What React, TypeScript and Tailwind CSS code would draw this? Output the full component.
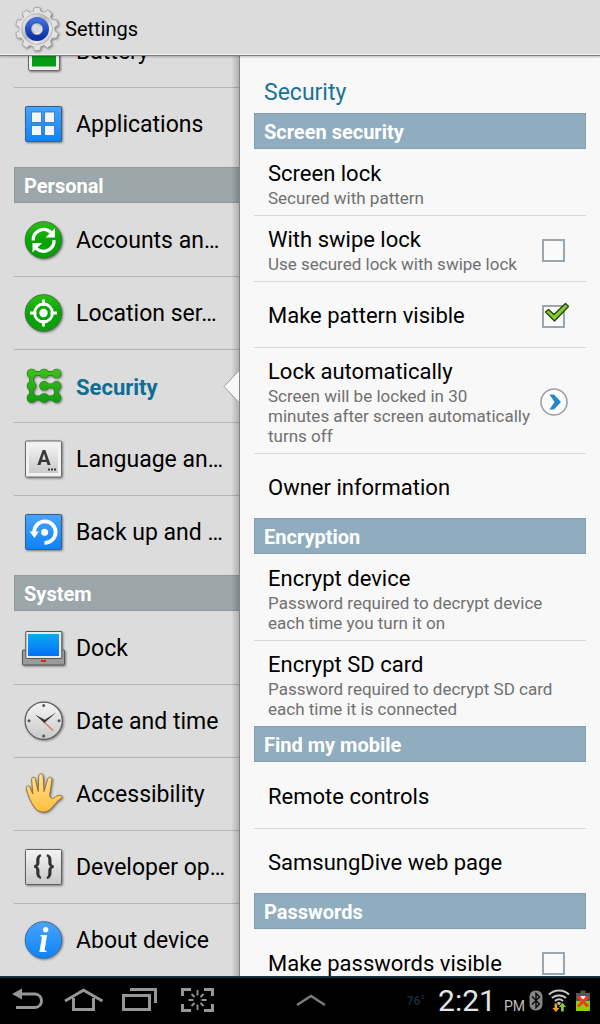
import type { ReactNode } from 'react'

// ── Sidebar icons (44x44 canvas) ──────────
function Icon({ children }: { children: ReactNode }) {
  return (
    <svg width="44" height="44" viewBox="0 0 44 44" className="shrink-0 drop-shadow-[1px_1px_1px_rgba(0,0,0,0.45)]" aria-hidden="true">
      {children}
    </svg>
  )
}

function Gradients() {
  return (
    <svg width="0" height="0" className="absolute" aria-hidden="true">
      <defs>
        <linearGradient id="blue" x1="0" y1="0" x2="0" y2="1">
          <stop offset="0" stopColor="#4aa3fb" />
          <stop offset="1" stopColor="#0b84f8" />
        </linearGradient>
        <linearGradient id="green" x1="0" y1="0" x2="0" y2="1">
          <stop offset="0" stopColor="#2cc015" />
          <stop offset="0.5" stopColor="#06a406" />
          <stop offset="1" stopColor="#0c9c0e" />
        </linearGradient>
        <linearGradient id="pattern" gradientUnits="userSpaceOnUse" x1="0" y1="5" x2="0" y2="39">
          <stop offset="0" stopColor="#3fc218" />
          <stop offset="1" stopColor="#0d9d0f" />
        </linearGradient>
        <linearGradient id="silver" x1="0" y1="0" x2="0" y2="1">
          <stop offset="0" stopColor="#f4f4f4" />
          <stop offset="1" stopColor="#c9c9c9" />
        </linearGradient>
        <linearGradient id="screen" x1="0" y1="0" x2="0" y2="1">
          <stop offset="0" stopColor="#08aaf0" />
          <stop offset="1" stopColor="#0470f8" />
        </linearGradient>
        <linearGradient id="skin" x1="0" y1="0" x2="0" y2="1">
          <stop offset="0" stopColor="#ffe196" />
          <stop offset="1" stopColor="#ffbe3c" />
        </linearGradient>
        <linearGradient id="metal" x1="0" y1="0" x2="1" y2="1">
          <stop offset="0" stopColor="#fafafa" />
          <stop offset="0.45" stopColor="#b9b9b9" />
          <stop offset="0.7" stopColor="#ececec" />
          <stop offset="1" stopColor="#a9a9a9" />
        </linearGradient>
        <linearGradient id="ring" x1="0" y1="0" x2="0" y2="1">
          <stop offset="0" stopColor="#3f6fdc" />
          <stop offset="1" stopColor="#0a2fa8" />
        </linearGradient>
      </defs>
    </svg>
  )
}

const BatteryIcon = () => (
  <Icon>
    <rect x="6.5" y="4.5" width="31" height="37" rx="1.5" fill="#efefef" stroke="#666" />
    <rect x="10" y="10" width="24" height="27.5" fill="#069b17" />
  </Icon>
)

const ApplicationsIcon = () => (
  <Icon>
    <rect x="3.5" y="4.5" width="36" height="35" rx="1" fill="url(#blue)" stroke="#33618f" />
    <g fill="#f2f6fa" stroke="#2a72b8" strokeWidth="0.8">
      <rect x="9.5" y="10" width="10" height="10.5" />
      <rect x="22.5" y="10" width="10" height="10.5" />
      <rect x="9.5" y="23.5" width="10" height="10" />
      <rect x="22.5" y="23.5" width="10" height="10" />
    </g>
  </Icon>
)

const SyncIcon = () => (
  <Icon>
    <circle cx="21.5" cy="22" r="18.3" fill="url(#green)" stroke="#44703f" />
    <g fill="none" stroke="#fff" strokeWidth="3.2">
      <path d="M11.2 22.5A10.5 10.5 0 0 1 29 14.5" />
      <path d="M32 22A10.5 10.5 0 0 1 14 30" />
    </g>
    <path d="M33 10V19.5H23.5ZM10.5 34.5V25H20Z" fill="#fff" />
  </Icon>
)

const LocationIcon = () => (
  <Icon>
    <circle cx="21.5" cy="22" r="18.3" fill="url(#green)" stroke="#44703f" />
    <circle cx="21.5" cy="22" r="9" fill="none" stroke="#fff" strokeWidth="2.8" />
    <circle cx="21.5" cy="22" r="4.2" fill="#fff" />
    <path d="M21.5 8.5V15M21.5 29V35.5M8 22H14.5M28.5 22H35" stroke="#fff" strokeWidth="2.8" />
  </Icon>
)

const patternDots = [
  [9.5, 9.5], [22, 9.5], [34.5, 9.5],
  [9.5, 21.8], [22, 21.8], [34.5, 21.8],
  [9.5, 34], [22, 34], [34.5, 34],
]
const patternLine = 'M34.5 9.5H9.5V34H34.5V21.8H22'

const SecurityIcon = () => (
  <Icon>
    <path d={patternLine} fill="none" stroke="#2c7a1e" strokeWidth="4.8" />
    {patternDots.map(([x, y]) => (
      <circle key={`${x}-${y}`} cx={x} cy={y} r="4.8" fill="#2c7a1e" />
    ))}
    <path d={patternLine} fill="none" stroke="url(#pattern)" strokeWidth="3.4" />
    {patternDots.map(([x, y]) => (
      <circle key={`${x}-${y}`} cx={x} cy={y} r="4.2" fill="url(#pattern)" />
    ))}
  </Icon>
)

const LanguageIcon = () => (
  <Icon>
    <rect x="3.5" y="4" width="36" height="36" rx="1" fill="#f1f1f1" stroke="#6a6a6a" />
    <rect x="7" y="7" width="29" height="29" fill="url(#silver)" />
    <text x="22" y="28" textAnchor="middle" fontFamily="Roboto, sans-serif" fontSize="20" fontWeight="700" fill="#383838">A</text>
    <path d="M26 32.5h2M29 32.5h2M32 32.5h2" stroke="#383838" strokeWidth="2" />
  </Icon>
)

const BackupIcon = () => (
  <Icon>
    <rect x="3.5" y="4.5" width="36" height="35" rx="1" fill="url(#blue)" stroke="#33618f" />
    <path d="M12.2 22A10.7 10.7 0 1 1 22.5 32.8" fill="none" stroke="#fff" strokeWidth="3.8" />
    <path d="M7.5 21.5H17L12.5 28Z" fill="#fff" />
    <circle cx="22.6" cy="22.3" r="3.5" fill="#fff" />
  </Icon>
)

const DockIcon = () => (
  <Icon>
    <rect x="0.5" y="24" width="42" height="15" rx="1" fill="#9b9b9b" stroke="#555" />
    <rect x="3.8" y="5.5" width="36" height="27" rx="0.5" fill="#e9e9e9" stroke="#555" />
    <rect x="6" y="8" width="31" height="22" fill="url(#screen)" />
    <rect x="19" y="34" width="5" height="2" fill="#d8290e" />
  </Icon>
)

const ClockIcon = () => (
  <Icon>
    <circle cx="21.7" cy="21.7" r="18.6" fill="url(#silver)" stroke="#5c5c5c" strokeWidth="1.2" />
    <g fill="#555">
      <circle cx="21.7" cy="6.5" r="1.5" />
      <circle cx="21.7" cy="37" r="1.5" />
      <circle cx="7" cy="21.8" r="1.5" />
      <circle cx="37" cy="21.8" r="1.5" />
    </g>
    <path d="M21.5 22.5L31 31.5" stroke="#e46a64" strokeWidth="1.2" />
    <path d="M13 15.5L22.8 20.8L34.5 13.2L22.3 24Z" fill="#333" />
  </Icon>
)

const HandIcon = () => (
  <Icon>
    <path
      d="M13 36C9 31 5.5 22.5 4.3 16.5C3.8 13.5 7 12.8 8 15.5L10.8 22L9.6 8C9.4 4.5 13 4.4 13.5 7.5L16.2 19.5L16.7 4C16.8 1 21 1 21.2 4L22 19.5L25.7 7C26.6 4 30.4 5 29.9 8L27.6 23.5C28.2 26.5 30.3 27.2 32 25.8C34 24 36.5 23 38.5 23.3C40.7 23.7 40.3 26 38.5 27C35 29 32.5 32.5 30 35.5C25.5 41.5 17.5 41.5 13 36Z"
      fill="url(#skin)"
      stroke="#8a6a33"
      strokeWidth="0.9"
    />
  </Icon>
)

const DeveloperIcon = () => (
  <Icon>
    <rect x="3.5" y="4.5" width="36" height="35" rx="1" fill="url(#silver)" stroke="#5f5f5f" />
    <text x="15.5" y="29" textAnchor="middle" fontFamily="Roboto, sans-serif" fontSize="25" fontWeight="700" fill="#333">{'{'}</text>
    <text x="28" y="29" textAnchor="middle" fontFamily="Roboto, sans-serif" fontSize="25" fontWeight="700" fill="#333">{'}'}</text>
  </Icon>
)

const AboutIcon = () => (
  <Icon>
    <circle cx="21.5" cy="22" r="18.3" fill="url(#blue)" stroke="#3c6da0" />
    <text x="21.5" y="34" textAnchor="middle" fontFamily="'Liberation Serif', serif" fontSize="36" fontWeight="700" fontStyle="italic" fill="#fff">i</text>
  </Icon>
)

function GearIcon() {
  return (
    <svg width="46" height="46" viewBox="-23 -23 46 46" className="drop-shadow-[1px_1px_1px_rgba(0,0,0,0.4)]" aria-hidden="true">
      <g fill="#e2e2e2" stroke="#9a9a9a" strokeWidth="0.7">
        {[0, 36, 72, 108, 144, 180, 216, 252, 288, 324].map((angle) => (
          <path key={angle} d="M-4.5 -16L-2.6 -21.5H2.6L4.5 -16Z" transform={`rotate(${angle})`} />
        ))}
      </g>
      <circle r="17.5" fill="#e4e4e4" />
      <circle r="15.5" fill="url(#metal)" stroke="#a5a5a5" strokeWidth="0.7" />
      <circle r="9" fill="none" stroke="url(#ring)" strokeWidth="6" />
      <circle r="6" fill="url(#metal)" stroke="#0d2c85" strokeWidth="0.5" />
      <circle r="4" fill="#d6dae4" />
    </svg>
  )
}

// ── Data ──────────────────────────────────
type MenuItem = { label: string; icon: () => ReactNode; active?: boolean }

const menu: { title?: string; items: MenuItem[] }[] = [
  {
    items: [
      { label: 'Battery', icon: BatteryIcon },
      { label: 'Applications', icon: ApplicationsIcon },
    ],
  },
  {
    title: 'Personal',
    items: [
      { label: 'Accounts an…', icon: SyncIcon },
      { label: 'Location ser…', icon: LocationIcon },
      { label: 'Security', icon: SecurityIcon, active: true },
      { label: 'Language an…', icon: LanguageIcon },
      { label: 'Back up and …', icon: BackupIcon },
    ],
  },
  {
    title: 'System',
    items: [
      { label: 'Dock', icon: DockIcon },
      { label: 'Date and time', icon: ClockIcon },
      { label: 'Accessibility', icon: HandIcon },
      { label: 'Developer op…', icon: DeveloperIcon },
      { label: 'About device', icon: AboutIcon },
    ],
  },
]

type Pref = { title: string; summary?: string; control?: 'on' | 'off' | 'more' }

const preferences: { title: string; items: Pref[] }[] = [
  {
    title: 'Screen security',
    items: [
      { title: 'Screen lock', summary: 'Secured with pattern' },
      { title: 'With swipe lock', summary: 'Use secured lock with swipe lock', control: 'off' },
      { title: 'Make pattern visible', control: 'on' },
      {
        title: 'Lock automatically',
        summary: 'Screen will be locked in 30 minutes after screen automatically turns off',
        control: 'more',
      },
      { title: 'Owner information' },
    ],
  },
  {
    title: 'Encryption',
    items: [
      { title: 'Encrypt device', summary: 'Password required to decrypt device each time you turn it on' },
      { title: 'Encrypt SD card', summary: 'Password required to decrypt SD card each time it is connected' },
    ],
  },
  {
    title: 'Find my mobile',
    items: [{ title: 'Remote controls' }, { title: 'SamsungDive web page' }],
  },
  {
    title: 'Passwords',
    items: [{ title: 'Make passwords visible', control: 'off' }],
  },
]

// ── Sub-components ────────────────────────
function MenuRow({ label, icon: ItemIcon, active }: MenuItem) {
  return (
    <li className="relative border-b border-[#b3b3b3] last:border-b-0">
      <a
        href="#"
        aria-current={active ? 'page' : undefined}
        className={`flex h-[72px] items-center gap-[10px] pl-2 whitespace-nowrap ${active ? 'text-[22px] font-bold text-[#0f6d94]' : 'text-[23px] text-black'}`}
      >
        <ItemIcon />
        <span className="pt-0.5">{label}</span>
      </a>
      {active && (
        <svg width="16" height="34" viewBox="0 0 16 34" className="absolute top-5 right-0 z-10" aria-hidden="true">
          <path d="M16 1L1 16.5L16 32Z" fill="#f8f8f8" />
          <path d="M15.5 1L1 16.5L15.5 32" fill="none" stroke="#9b9b9b" />
        </svg>
      )}
    </li>
  )
}

function PrefRow({ title, summary, control }: Pref) {
  const text = (
    <span className="flex-1">
      <span className="block text-[22px] leading-7 text-black">{title}</span>
      {summary && <span className="block text-[17px] leading-5 text-[#707070]">{summary}</span>}
    </span>
  )
  const row = 'flex w-full items-center pt-[10px] pb-[7px] pl-[14px] text-left'

  return (
    <li className="flex min-h-[66px] border-b border-[#d6d8da] last:min-h-16 last:border-b-0">
      {control === 'on' || control === 'off' ? (
        <label className={`${row} pr-[21px]`}>
          {text}
          <span className="relative flex">
            <input
              type="checkbox"
              defaultChecked={control === 'on'}
              className="peer size-[23px] appearance-none border-2 border-[#9ba6ae] bg-[#fafafa]"
            />
            <svg width="28" height="22" viewBox="0 0 28 22" className="pointer-events-none absolute -top-1 left-0 hidden peer-checked:block" aria-hidden="true">
              <path d="M3.5 11L6.5 8.5L12 13.5L23.5 2.5L26.5 5.5L12.5 20Z" fill="#86cc2a" stroke="#24400c" strokeWidth="1.3" strokeLinejoin="round" />
            </svg>
          </span>
        </label>
      ) : (
        <button type="button" className={`${row} ${control === 'more' ? 'gap-[10px] pr-[18px]' : 'pr-[14px]'}`}>
          {text}
          {control === 'more' && (
            <svg width="28" height="28" viewBox="0 0 28 28" className="shrink-0" aria-hidden="true">
              <circle cx="14" cy="14" r="13" fill="#fcfcfc" stroke="#9aa0a8" strokeWidth="1.6" />
              <path d="M9.5 6.5H14L21 14L14 21.5H9.5L14.5 14Z" fill="#2489cb" />
            </svg>
          )}
        </button>
      )}
    </li>
  )
}

function NavBar() {
  return (
    <footer className="flex h-12 shrink-0 items-center border-t-2 border-[#12303d] bg-black">
      <nav className="flex items-center pl-[10px] text-[#969696]">
        <button type="button" aria-label="Back">
          <svg width="36" height="26" viewBox="0 0 36 26" fill="none" stroke="currentColor" strokeWidth="3">
            <path d="M10 6H25.5A6.8 6.8 0 0 1 25.5 19.5H6" />
            <path d="M2 6L12 0.5V11.5Z" fill="currentColor" stroke="none" />
          </svg>
        </button>
        <button type="button" aria-label="Home" className="ml-[18px]">
          <svg width="40" height="26" viewBox="0 0 40 26" fill="none" stroke="currentColor" strokeWidth="3">
            <path d="M1 13L19.5 2.2L38.5 13" />
            <path d="M9.5 10V21.5H29.5V10" />
          </svg>
        </button>
        <button type="button" aria-label="Recent apps" className="ml-[18px]">
          <svg width="36" height="26" viewBox="0 0 36 26" fill="none" stroke="currentColor" strokeWidth="3">
            <rect x="1.5" y="7.5" width="26" height="14" />
            <path d="M8 1.5H33.5V15" />
          </svg>
        </button>
        <button type="button" aria-label="Capture screen" className="ml-[22px]">
          <svg width="36" height="26" viewBox="0 0 36 26" fill="none" stroke="currentColor" strokeWidth="3">
            <path d="M11 1.5H2.5V8M24 1.5H32.5V8M11 22.5H2.5V16M24 22.5H32.5V16" />
            <path d="M17.5 2V7.5M17.5 16.5V22M8.500 12H13.5M21.5 12H26.5M11.5 6L14.5 9M23.5 6L20.5 9M11.5 18L14.5 15M23.5 18L20.5 15" strokeWidth="1.800" />
          </svg>
        </button>
      </nav>
      <button type="button" aria-label="Open tray" className="mx-auto text-[#7b7b7b]">
        <svg width="32" height="14" viewBox="0 0 32 14" fill="none" stroke="currentColor" strokeWidth="2.5">
          <path d="M2 11L16 2L30 11" />
        </svg>
      </button>
      <div className="flex items-center pr-[10px]">
        <span className="mr-[13px] text-xs font-bold text-[#172733]">76°</span>
        <span className="flex items-baseline gap-2 text-[#e4e4e4]">
          <span className="text-[30px] leading-9">2:21</span>
          <span className="text-sm text-[#bdbdbd]">PM</span>
        </span>
        <svg width="14" height="22" viewBox="0 0 14 22" className="ml-1" aria-label="Bluetooth">
          <rect x="0.5" y="0.5" width="13" height="20" rx="6" fill="#858585" />
          <path d="M3 6.5L10.5 14L7 17.5V3.5L10.5 7L3 14.5" fill="none" stroke="#0a0a0a" strokeWidth="1.4" />
        </svg>
        <svg width="22" height="24" viewBox="0 0 22 24" className="ml-[5px]" aria-label="Wi-Fi">
          <g fill="none" stroke="#c4c4c4" strokeWidth="2.2">
            <path d="M1 5.5A14.5 14.5 0 0 1 21 5.5" />
            <path d="M4 9A10.5 10.5 0 0 1 18 9" />
            <path d="M7 12A6 6 0 0 1 15 12" />
          </g>
          <path d="M11 16.5L8.8 13.7Q11 12.3 13.2 13.7Z" fill="#c4c4c4" />
          <path d="M6.5 14.5H9.300V19H11.5L7.9 23L4.3 19H6.5Z" fill="#f59a2e" />
          <path d="M13 22.5V18H10.8L14.4 13.5L18 18H15.8V22.5Z" fill="#8ccb1e" />
        </svg>
        <svg width="14" height="22" viewBox="0 0 14 22" className="ml-[6px]" aria-label="Battery not charging">
          <path d="M4.5 0.5H9.5V3H14V11H0V3H4.5Z" fill="#555" />
          <rect y="11" width="14" height="10" fill="#8fce00" />
          <path d="M4.500 6H9.5V11H4.5Z" fill="#f3f3f3" />
          <path d="M2 6.5L12 16.5M12 6.5L2 16.5" stroke="#e8401f" strokeWidth="3" />
        </svg>
      </div>
    </footer>
  )
}

// ── Page ──────────────────────────────────
export default function App() {
  return (
    <div className="flex h-screen flex-col overflow-hidden bg-[#dcdcdc] font-[Roboto,sans-serif]">
      <Gradients />

      {/* Action bar */}
      <header className="z-20 flex h-14 shrink-0 items-center gap-[5px] border-b border-[#7d7d7d] bg-[#dcdcdc] pt-0.5 pl-[14px] shadow-[inset_0_-1px_0_#efefef,0_1px_2px_rgba(0,0,0,0.25)]">
        <GearIcon />
        <h1 className="text-xl text-black">Settings</h1>
      </header>

      <main className="flex min-h-0 flex-1">
        {/* Category list, scrolled to its end */}
        <nav className="relative flex w-2/5 flex-col justify-end overflow-hidden border-r border-[#858585] pl-[14px]">
          {menu.map((group, i) => (
            <section key={i} className="mb-[7px] shrink-0 last-of-type:mb-0">
              {group.title && (
                <h2 className="mb-px flex h-9 items-center border border-r-0 border-[#8f999e] bg-[#9ca6ab] pt-0.5 pl-[9px] text-xl font-bold text-white">
                  {group.title}
                </h2>
              )}
              <ul>
                {group.items.map((item) => (
                  <MenuRow key={item.label} {...item} />
                ))}
              </ul>
            </section>
          ))}
          <div className="pointer-events-none absolute inset-y-0 right-0 w-2 bg-linear-to-r from-transparent to-black/20" />
        </nav>

        {/* Security preferences */}
        <div className="flex-1 overflow-hidden bg-[#f8f8f8] px-[14px]">
          <h2 className="px-[10px] pt-[22px] pb-[5px] text-[23px] leading-[30px] text-[#1a7299]">Security</h2>
          {preferences.map((group) => (
            <section key={group.title}>
              <h3 className="mb-px flex h-9 items-center border border-[#829fb1] bg-[#90adc0] pt-0.5 pl-[9px] text-xl font-bold text-white">
                {group.title}
              </h3>
              <ul>
                {group.items.map((item) => (
                  <PrefRow key={item.title} {...item} />
                ))}
              </ul>
            </section>
          ))}
        </div>
      </main>

      <NavBar />
    </div>
  )
}
